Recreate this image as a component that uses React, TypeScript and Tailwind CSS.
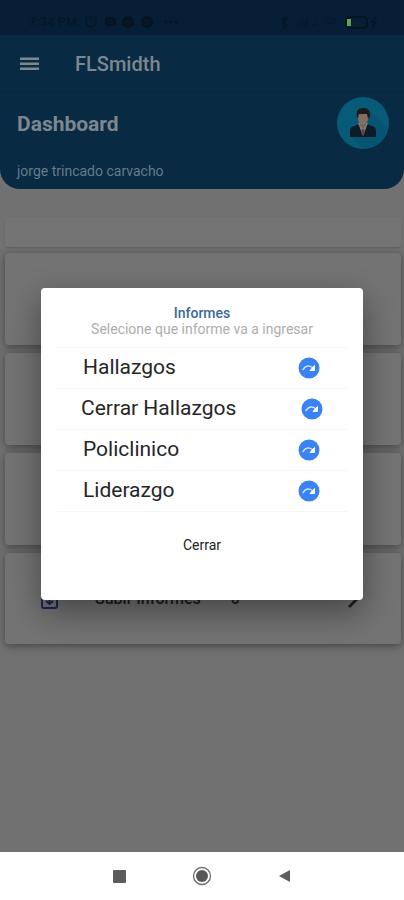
interface Report {
  name: string
  wide?: boolean
}

const reports: Report[] = [
  { name: 'Hallazgos' },
  { name: 'Cerrar Hallazgos', wide: true },
  { name: 'Policlinico' },
  { name: 'Liderazgo' },
]

function StatusBar() {
  return (
    <div className="flex h-[35px] items-center justify-between bg-[#071f36] pt-2 pr-[26px] pl-[29px] text-[#061626]">
      <div className="flex items-center gap-2">
        <span className="text-[13px] font-medium">7:34 PM</span>
        <svg className="-ml-1" width="98" height="14" viewBox="0 0 98 14" fill="none" aria-hidden="true">
          <circle cx="9" cy="7" r="5" stroke="currentColor" strokeWidth="1.5" />
          <path d="M9 4v3l2 1M3 3l2-2M15 3l-2-2" stroke="currentColor" />
          <rect x="23" y="2" width="11" height="9" rx="3" fill="#061320" />
          <path d="M26 5h5M26 8h5" stroke="#071f36" />
          <circle cx="46" cy="7" r="6" fill="#061320" />
          <path d="M42 8l3-2 2 2 3-2" stroke="#071f36" />
          <circle cx="65" cy="7" r="6" fill="#061320" />
          <path d="M62 6h6M63 9h4" stroke="#071f36" />
          <circle cx="84" cy="7" r="1.5" fill="#061320" />
          <circle cx="89" cy="7" r="1.5" fill="#061320" />
          <circle cx="94" cy="7" r="1.5" fill="#061320" />
        </svg>
      </div>
      <svg width="100" height="14" viewBox="0 0 100 14" fill="none" aria-hidden="true">
        <path d="M3 4l6 6-3 3V1l3 3-6 6" stroke="currentColor" strokeWidth="1.5" />
        <path d="M20 12V8M23 12V6M26 12V4M29 12V2M35 11V9M38 11V7" stroke="#061a2e" strokeWidth="2" />
        <path d="M46 6q6-5 12 0M49 9q3-3 6 0" stroke="#061a2e" strokeWidth="1.5" />
        <rect x="68" y="2" width="21" height="11" rx="3" stroke="#061320" strokeWidth="2" />
        <rect x="69" y="4" width="4" height="7" fill="#62a052" />
        <path d="M98 2l-4 5h4l-4 5" stroke="currentColor" strokeWidth="1.5" />
      </svg>
    </div>
  )
}

function Avatar() {
  return (
    <svg width="52" height="52" viewBox="0 0 52 52" role="img" aria-label="Profile">
      <circle cx="26" cy="26" r="26" fill="#075a78" />
      <path d="M34 15L50 31A26 26 0 0 1 28 52L14 40Z" fill="#065471" />
      <path d="M13 40v-6q0-4 4-5l5-2h8l5 2q4 1 4 5v6z" fill="#0d1a27" />
      <path d="M21 26l5 13 5-13z" fill="#7d7d7d" />
      <path d="M25 32h2l1 4-2 3-2-3z" fill="#653b48" />
      <path d="M23 23h6v5l-3 4-3-4z" fill="#796052" />
      <ellipse cx="26" cy="21" rx="5" ry="7" fill="#846c5e" />
      <path d="M20 20q-2-8 5-9 9-1 8 9l-2 1-1-4h-8l-1 4z" fill="#1e1c1b" />
    </svg>
  )
}

function RedoBadge() {
  return (
    <svg width="22" height="22" viewBox="0 0 22 22" fill="none" aria-hidden="true">
      <circle cx="11" cy="11" r="10.5" fill="#3983f2" />
      <path d="M5 12.5Q9 6.5 14.5 10.5" stroke="#d3e3fc" strokeWidth="1.5" strokeLinecap="round" />
      <path d="M16.500 8.500v5H12z" fill="#fff" stroke="#fff" strokeLinejoin="round" />
    </svg>
  )
}

function ReportsDialog() {
  return (
    <div
      role="dialog"
      aria-modal="true"
      aria-labelledby="reports-title"
      className="w-full rounded-[4px] bg-white px-4 pt-[17px] pb-[45px] shadow-[0_12px_32px_rgba(0,0,0,0.4)]"
    >
      <h2 id="reports-title" className="text-center text-sm leading-4 font-medium text-[#386b94]">
        Informes
      </h2>
      <p className="text-center text-sm leading-4 text-[#adadad]">Selecione que informe va a ingresar</p>
      <ul className="mt-[10px] border-t border-[#f6f6f6]">
        {reports.map((report) => (
          <li key={report.name} className="border-b border-[#f6f6f6]">
            <button
              type="button"
              className={`flex h-10 w-full items-center justify-between text-[21px] text-[#262626] ${
                report.wide ? 'pr-6 pl-6' : 'pr-[27px] pl-[26px]'
              }`}
            >
              {report.name}
              <RedoBadge />
            </button>
          </li>
        ))}
      </ul>
      <button type="button" className="mx-auto mt-[23px] block text-sm text-[#222222]">
        Cerrar
      </button>
    </div>
  )
}

export default function App() {
  return (
    <div className="flex min-h-screen flex-col bg-[#717171] font-[Roboto,sans-serif]">
      <StatusBar />

      <div className="relative flex-1">
        <header className="rounded-b-[20px] bg-[#082a43] text-[#7d8790]">
          <div className="flex h-[58px] items-center gap-[35px] border-b border-[#08273f] pl-5">
            <button type="button" aria-label="Menu">
              <svg width="20" height="16" viewBox="0 0 20 16" fill="#7d8790">
                <path d="M0 1.500h19v2.500H0zM0 6.500h19V9H0zM0 11.500h19V14H0z" />
              </svg>
            </button>
            <span className="text-xl font-medium">FLSmidth</span>
          </div>
          <div className="flex items-center justify-between pt-1 pr-[15px] pl-[17px]">
            <h1 className="pt-1 text-[21px] font-bold">Dashboard</h1>
            <Avatar />
          </div>
          <p className="pt-3 pb-2 pl-[17px] text-sm leading-5 text-[#667b8c]">jorge trincado carvacho</p>
        </header>

        {/* Cards behind the dialog */}
        <main className="flex flex-col gap-2 pt-7 pr-[3px] pl-[5px]">
          <div className="-mb-0.5 h-[30px] rounded-[2px] bg-[#747474] shadow-[0_1px_2px_rgba(0,0,0,0.15)]" />
          <div className="h-[92px] rounded-[4px] bg-[#737373] shadow-[0_2px_8px_rgba(0,0,0,0.4)]" />
          <div className="h-[92px] rounded-[4px] bg-[#737373] shadow-[0_2px_8px_rgba(0,0,0,0.4)]" />
          <div className="h-[92px] rounded-[4px] bg-[#737373] shadow-[0_2px_8px_rgba(0,0,0,0.4)]" />
          <div className="flex h-[91px] items-center rounded-[4px] bg-[#737373] pr-10 pl-9 text-base font-medium text-[#1c1c1c] shadow-[0_2px_8px_rgba(0,0,0,0.4)]">
            <svg width="17" height="20" viewBox="0 0 17 20" fill="none" stroke="#1f2452" strokeWidth="2">
              <rect x="1" y="1" width="15" height="18" rx="2" />
              <path d="M8.500 4v10M5 12l3.500 3 3.500-3" />
            </svg>
            <span className="ml-[37px]">Subir Informes</span>
            <span className="ml-[30px]">0</span>
            <svg className="ml-auto" width="14" height="20" viewBox="0 0 14 20" stroke="#222222" strokeWidth="3">
              <path d="M2 18L13 7" />
            </svg>
          </div>
        </main>

        <div className="absolute inset-0 flex items-center justify-center px-[41px]">
          <ReportsDialog />
        </div>
      </div>

      <nav className="grid h-12 grid-cols-[1fr_auto_1fr] items-center gap-[66px] bg-white">
        <button type="button" aria-label="Recents" className="justify-self-end">
          <svg width="13" height="13" viewBox="0 0 13 13" fill="#5c5c5c">
            <rect width="13" height="13" rx="1" />
          </svg>
        </button>
        <button type="button" aria-label="Home">
          <svg width="20" height="20" viewBox="0 0 20 20" fill="none">
            <circle cx="10" cy="10" r="8.500" stroke="#6b6b6b" strokeWidth="1.300" />
            <circle cx="10" cy="10" r="6" fill="#585858" />
          </svg>
        </button>
        <button type="button" aria-label="Back">
          <svg width="13" height="14" viewBox="0 0 13 14" fill="#5c5c5c">
            <path d="M12 1v12L1 7z" />
          </svg>
        </button>
      </nav>
    </div>
  )
}
